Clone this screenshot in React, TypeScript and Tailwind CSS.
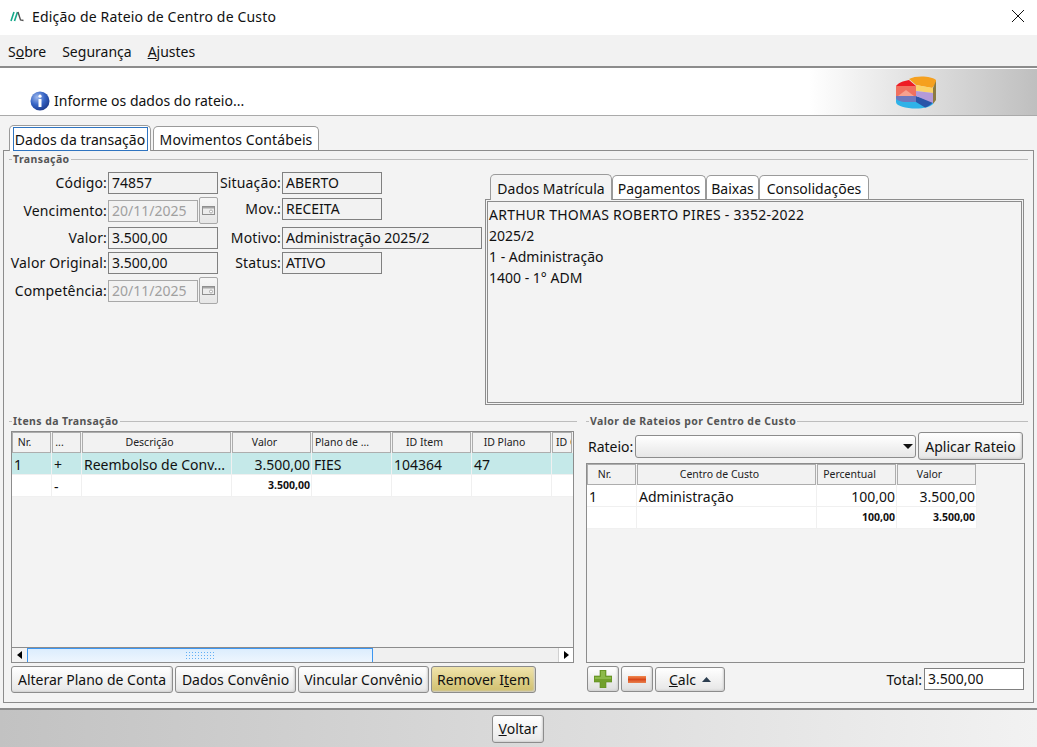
const font = "font-['Noto_Sans',sans-serif]";

function Box({ w, children, disabled, white }: { w: string; children?: React.ReactNode; disabled?: boolean; white?: boolean }) {
  return (
    <div className={`${w} h-[22px] shrink-0 border border-[#808080] pl-[3px] text-[14px] leading-[20px] ${disabled ? "border-[#a8a8a8] text-[#a0a0a0]" : "text-[#111]"} ${white ? "bg-white" : "bg-[#f2f2f2]"}`}>
      {children}
    </div>
  );
}

function Label({ w, children }: { w: string; children: React.ReactNode }) {
  return <div className={`${w} shrink-0 pr-[1px] text-right text-[14px] leading-[20px] tracking-[0.15px] whitespace-nowrap text-[#111]`}>{children}</div>;
}

function CalendarBtn() {
  return (
    <div className="ml-[1px] flex h-[27px] w-[19px] shrink-0 items-center justify-center rounded-[2px] border border-[#a8a8a8] bg-gradient-to-b from-[#f6f6f6] to-[#e6e6e6]">
      <svg width="13" height="9" viewBox="0 0 13 9">
        <rect x="0.5" y="0.5" width="12" height="8" fill="#ececec" stroke="#8f8f8f" />
        <rect x="1" y="1" width="11" height="1.5" fill="#a5a5a5" />
        <circle cx="9" cy="5.5" r="1.5" fill="#fff" stroke="#8f8f8f" strokeWidth="0.7" />
      </svg>
    </div>
  );
}

function Legend({ children }: { children: React.ReactNode }) {
  return (
    <div className="flex h-[10px] items-center">
      <div className="h-[1px] w-[3px] bg-[#bdbdbd]" />
      <span className="px-[1px] text-[10.5px] leading-[10px] font-bold tracking-[0.4px] text-[#555]">{children}</span>
      <div className="h-[1px] flex-1 bg-[#bdbdbd]" />
    </div>
  );
}

function Btn({ className, children }: { className?: string; children: React.ReactNode }) {
  return (
    <div className={`flex items-center justify-center rounded-[3px] border border-[#8c8c8c] text-[14px] text-[#111] shadow-[inset_-1px_-1px_2px_#d0d0d0] ${className ?? "bg-gradient-to-b from-white to-[#e8e8e8]"}`}>
      {children}
    </div>
  );
}

function Head({ children, align }: { children?: React.ReactNode; align?: string }) {
  return (
    <div className={`mr-[1px] flex h-[21px] items-center overflow-hidden border border-[#adadad] bg-[#f2f2f2] pt-[1px] text-[10.5px] whitespace-nowrap text-[#222] ${align ?? "justify-center pr-[14px]"}`}>
      {children}
    </div>
  );
}

function Cell({ children, right, bold, last }: { children?: React.ReactNode; right?: boolean; bold?: boolean; last?: boolean }) {
  return (
    <div className={`flex h-[22px] items-center overflow-hidden whitespace-nowrap border-b border-[#f0f0f0] pt-[1px] pl-[2px] ${last ? "" : "border-r"} ${right ? "justify-end pr-[1px]" : ""} ${bold ? "text-[10.5px] font-bold" : "text-[14px]"} text-[#111]`}>
      {children}
    </div>
  );
}

function MatrixLogo() {
  return (
    <svg width="14" height="11" viewBox="0 0 14 11">
      <path d="M1 10 L4 1 M4.5 10 L7.5 1" stroke="#14a88a" strokeWidth="1.6" fill="none" />
      <path d="M8 1 L10.5 9 L13.5 9.5" stroke="#555" strokeWidth="1.4" fill="none" />
    </svg>
  );
}

function InfoIcon() {
  return (
    <svg width="20" height="20" viewBox="0 0 20 20">
      <defs>
        <radialGradient id="inf" cx="35%" cy="30%" r="75%">
          <stop offset="0" stopColor="#9db8ee" />
          <stop offset="0.55" stopColor="#3563c4" />
          <stop offset="1" stopColor="#1c3a8c" />
        </radialGradient>
      </defs>
      <circle cx="10" cy="10" r="9.5" fill="url(#inf)" />
      <circle cx="10" cy="5.2" r="1.6" fill="#fff" />
      <rect x="8.5" y="8" width="3" height="8" rx="0.6" fill="#fff" />
    </svg>
  );
}

function PieLogo() {
  return (
    <svg width="40" height="33" viewBox="0 0 40 33">
      <path d="M0 21 V26 C0 30 10 32.500 20 32.500 C28 32.500 34 31 37 28 V21 Z" fill="#2fb2e8" />
      <path d="M20 20 L37 26 C35 29 32 30.500 29 31.500 L20 26 Z" fill="#2a55a8" />
      <path d="M0 10 C2 7 7 5 13 4 L20 10 Z" fill="#ee1c25" />
      <path d="M0 10 H20 V20 H0 Z" fill="#f0705f" />
      <path d="M2 20 L10 14 L18 20 Z" fill="#f7a190" />
      <path d="M0 20 H20 V26 H10 C5 26 0 24 0 22 Z" fill="#6f78bd" />
      <path d="M13 3 C20 -1 36 0 40 4 V8 L36 12 L20 9 Z" fill="#f5a01f" />
      <path d="M20 9 L37 12 V17 L20 15 Z" fill="#fbd268" />
      <path d="M20 15 L37 17 V27 L20 20 Z" fill="#b49ad8" />
      <path d="M37 12 L40 5 V24 L37 28 Z" fill="#8c7a40" />
    </svg>
  );
}

function PlusIcon() {
  return (
    <svg width="18" height="18" viewBox="0 0 18 18">
      <path d="M6 0 H12 V6 H18 V12 H12 V18 H6 V12 H0 V6 H6 Z" fill="#72a02c" stroke="#5d8a20" strokeWidth="0.6" />
      <path d="M7 1 H11 V7 H17 V9 H1 V7 H7 Z" fill="#8cb94a" />
    </svg>
  );
}

export default function App() {
  return (
    <div className={`flex h-[747px] w-[1037px] flex-col overflow-hidden bg-white ${font}`}>
      {/* barra de titulo */}
      <div className="flex h-[35px] shrink-0 items-center pr-[12px] pb-[3px] pl-[10px]">
        <MatrixLogo />
        <span className="ml-[8px] flex-1 text-[14px] tracking-[0.17px] text-[#111]">Edição de Rateio de Centro de Custo</span>
        <svg width="14" height="14" viewBox="0 0 14 14">
          <path d="M1 1 L13 13 M13 1 L1 13" stroke="#111" strokeWidth="1" />
        </svg>
      </div>

      {/* menu */}
      <div className="flex h-[33px] shrink-0 items-center gap-[16px] border-b-2 border-[#8c8c8c] bg-[#f2f2f2] pt-[1px] pl-[8px] text-[14px] text-[#111]">
        <span>S<u>o</u>bre</span>
        <span>Segurança</span>
        <span><u>A</u>justes</span>
      </div>

      {/* cabecalho */}
      <div className="mt-[1px] flex h-[47px] shrink-0 items-end border-b border-[#aaaaaa] bg-gradient-to-r from-white from-[78%] to-[#bfbfbf]">
        <div className="mb-[4px] ml-[30px] flex flex-1 items-center gap-[4px] text-[14px] text-[#111]">
          <InfoIcon />
          <span>Informe os dados do rateio...</span>
        </div>
        <div className="mr-[101px] mb-[6px]"><PieLogo /></div>
      </div>

      {/* corpo */}
      <div className="flex h-[592px] shrink-0 flex-col bg-[#f3f3f3] pt-[9px]">
        <div className="flex h-[25px] items-end pl-[9px]">
          <div className="z-10 -mb-[1px] flex h-[26px] w-[142px] items-center justify-center rounded-t-[5px] border border-b-0 border-[#9a9a9a] bg-white pt-[1px]">
            <div className="flex h-[24px] w-[135px] items-center justify-center border border-[#2f74c0] pt-[1px] text-[14px] whitespace-nowrap text-[#111]">Dados da transação</div>
          </div>
          <div className="ml-[2px] flex h-[24px] w-[166px] items-center justify-center rounded-t-[5px] border border-b-0 border-[#9a9a9a] bg-white pt-[1px] text-[14px] tracking-[0.1px] whitespace-nowrap text-[#111]">Movimentos Contábeis</div>
        </div>

        <div className="mx-[3px] flex h-[553px] flex-col border border-[#8c8c8c] px-[5px] pt-[3px]">
          <Legend>Transação</Legend>

          <div className="flex h-[249px]">
            {/* coluna de campos */}
            <div className="flex w-[208px] shrink-0 flex-col pt-[8px]">
              <div className="flex h-[22px] items-center"><Label w="w-[99px]">Código:</Label><Box w="w-[110px]">74857</Box></div>
              <div className="mt-[3px] flex h-[27px] items-center"><Label w="w-[99px]">Vencimento:</Label><Box w="w-[90px]" disabled>20/11/2025</Box><CalendarBtn /></div>
              <div className="mt-[3px] flex h-[22px] items-center"><Label w="w-[99px]">Valor:</Label><Box w="w-[110px]">3.500,00</Box></div>
              <div className="mt-[3px] flex h-[22px] items-center"><Label w="w-[99px]">Valor Original:</Label><Box w="w-[110px]">3.500,00</Box></div>
              <div className="mt-[3px] flex h-[27px] items-center"><Label w="w-[99px]">Competência:</Label><Box w="w-[90px]" disabled>20/11/2025</Box><CalendarBtn /></div>
            </div>

            <div className="flex w-[268px] shrink-0 flex-col pt-[8px]">
              <div className="flex h-[22px] items-center"><Label w="w-[65px]">Situação:</Label><Box w="w-[100px]">ABERTO</Box></div>
              <div className="mt-[4px] flex h-[22px] items-center"><Label w="w-[65px]">Mov.:</Label><Box w="w-[100px]">RECEITA</Box></div>
              <div className="mt-[7px] flex h-[22px] items-center"><Label w="w-[65px]">Motivo:</Label><Box w="w-[200px]">Administração 2025/2</Box></div>
              <div className="mt-[3px] flex h-[22px] items-center"><Label w="w-[65px]">Status:</Label><Box w="w-[100px]">ATIVO</Box></div>
            </div>

            {/* abas da matricula */}
            <div className="flex w-[539px] shrink-0 flex-col pt-[10px]">
              <div className="flex h-[25px] items-end pl-[5px] text-[14px] text-[#111]">
                <div className="z-10 -mb-[1px] flex h-[26px] w-[122px] items-center justify-center rounded-t-[5px] border border-b-0 border-[#9a9a9a] bg-[#f3f3f3] pt-[1px] whitespace-nowrap">Dados Matrícula</div>
                <div className="flex h-[24px] w-[94px] items-center justify-center rounded-t-[5px] border border-b-0 border-[#9a9a9a] bg-white pt-[1px] whitespace-nowrap">Pagamentos</div>
                <div className="flex h-[24px] w-[53px] items-center justify-center rounded-t-[5px] border border-b-0 border-[#9a9a9a] bg-white pt-[1px] whitespace-nowrap">Baixas</div>
                <div className="flex h-[24px] w-[110px] items-center justify-center rounded-t-[5px] border border-b-0 border-[#9a9a9a] bg-white pt-[1px] whitespace-nowrap">Consolidações</div>
              </div>
              <div className="h-[206px] border border-[#8c8c8c] p-[1px]">
                <div className="h-full border border-[#8c8c8c] pt-[2px] pl-[1px] text-[14px] leading-[21px] text-[#111]">
                  <div className="tracking-[0.25px]">ARTHUR THOMAS ROBERTO PIRES - 3352-2022</div>
                  <div>2025/2</div>
                  <div>1 - Administração</div>
                  <div>1400 - 1° ADM</div>
                </div>
              </div>
            </div>
          </div>

          {/* parte de baixo */}
          <div className="flex pt-[3px]">
            <div className="flex w-[568px] shrink-0 flex-col">
              <Legend>Itens da Transação</Legend>
              <div className="mt-[5px] ml-[2px] flex h-[232px] w-[563px] flex-col border border-[#8c8c8c]">
                <div className="grid flex-1 content-start overflow-hidden grid-cols-[40px_30px_150px_80px_80px_80px_80px_21px]">
                  <Head align="justify-center pr-[14px]">Nr.</Head>
                  <Head>...</Head>
                  <Head>Descrição</Head>
                  <Head>Valor</Head>
                  <Head align="justify-start pl-[2px]">Plano de ...</Head>
                  <Head>ID Item</Head>
                  <Head>ID Plano</Head>
                  <Head align="justify-start pl-[3px]">ID C</Head>

                  <div className="col-span-8 grid grid-cols-subgrid bg-[#c5e9e9]">
                    <Cell>1</Cell>
                    <Cell>+</Cell>
                    <Cell>Reembolso de Conv...</Cell>
                    <Cell right>3.500,00</Cell>
                    <Cell>FIES</Cell>
                    <Cell>104364</Cell>
                    <Cell>47</Cell>
                    <Cell last />
                  </div>
                  <div className="col-span-8 grid grid-cols-subgrid bg-white">
                    <Cell />
                    <Cell>-</Cell>
                    <Cell />
                    <Cell right bold>3.500,00</Cell>
                    <Cell />
                    <Cell />
                    <Cell />
                    <Cell last />
                  </div>
                </div>
                {/* barra de rolagem */}
                <div className="flex h-[15px] shrink-0 border-t border-[#8c8c8c] bg-[#f0f0f0]">
                  <div className="flex w-[15px] items-center justify-center bg-[#f3f3f3]">
                    <svg width="5" height="8" viewBox="0 0 5 8"><path d="M5 0 V8 L0 4 Z" fill="#000" /></svg>
                  </div>
                  <div className="flex w-[346px] items-center justify-center border-x border-t border-[#3d96f0] bg-gradient-to-b from-[#dcedfd] to-[#eef6fe]">
                    <div className="h-[9px] w-[30px] bg-[radial-gradient(#62b0f5_1px,transparent_1px)] bg-[length:3px_3px]" />
                  </div>
                  <div className="flex-1" />
                  <div className="flex w-[15px] items-center justify-center border-l border-[#d0d0d0] bg-white">
                    <svg width="5" height="8" viewBox="0 0 5 8"><path d="M0 0 V8 L5 4 Z" fill="#000" /></svg>
                  </div>
                </div>
              </div>
              <div className="mt-[3px] ml-[2px] flex h-[27px] gap-[2px]">
                <Btn className="w-[162px] bg-gradient-to-b from-white to-[#e6e6e6]">Alterar Plano de Conta</Btn>
                <Btn className="w-[121px] bg-gradient-to-b from-white to-[#e6e6e6]">Dados Convênio</Btn>
                <Btn className="w-[131px] bg-gradient-to-b from-white to-[#e6e6e6]">Vincular Convênio</Btn>
                <Btn className="w-[105px] bg-gradient-to-b from-[#f0e4ab] to-[#cfbe6c]"><span>Remover I<u>t</u>em</span></Btn>
              </div>
            </div>

            <div className="ml-[9px] flex w-[442px] shrink-0 flex-col">
              <Legend>Valor de Rateios por Centro de Custo</Legend>
              <div className="mt-[6px] flex h-[28px] items-center pl-[2px]">
                <span className="w-[47px] text-[14px] text-[#111]">Rateio:</span>
                <div className="flex h-[23px] w-[281px] items-center justify-end rounded-[3px] border border-[#8c8c8c] bg-gradient-to-b from-white to-[#e6e6e6] pr-[2px]">
                  <svg width="10" height="5" viewBox="0 0 10 5"><path d="M0 0 H10 L5 5 Z" fill="#111" /></svg>
                </div>
                <Btn className="ml-[2px] h-[28px] w-[105px] bg-gradient-to-b from-white to-[#e6e6e6]">Aplicar Rateio</Btn>
              </div>
              <div className="mt-[3px] h-[200px] w-[439px] border border-[#8c8c8c]">
                <div className="grid content-start grid-cols-[50px_180px_80px_80px]">
                  <Head>Nr.</Head>
                  <Head>Centro de Custo</Head>
                  <Head>Percentual</Head>
                  <Head>Valor</Head>
                  <div className="col-span-4 grid grid-cols-subgrid bg-white">
                    <Cell>1</Cell>
                    <Cell>Administração</Cell>
                    <Cell right>100,00</Cell>
                    <Cell right>3.500,00</Cell>
                  </div>
                  <div className="col-span-4 grid grid-cols-subgrid bg-white">
                    <Cell />
                    <Cell />
                    <Cell right bold>100,00</Cell>
                    <Cell right bold>3.500,00</Cell>
                  </div>
                </div>
              </div>
              <div className="mt-[3px] ml-[1px] flex h-[26px] items-center">
                <Btn className="h-[26px] w-[32px] bg-gradient-to-b from-white to-[#dedede]"><PlusIcon /></Btn>
                <Btn className="ml-[2px] h-[26px] w-[32px] bg-gradient-to-b from-white to-[#dedede]">
                  <div className="h-[7px] w-[18px] bg-gradient-to-b from-[#f08a50] via-[#d9481a] to-[#e8804d]" />
                </Btn>
                <Btn className="ml-[2px] h-[25px] w-[70px] gap-[6px] bg-gradient-to-b from-white to-[#e6e6e6]">
                  <span><u>C</u>alc</span>
                  <svg width="9" height="5" viewBox="0 0 9 5"><path d="M0 5 H9 L4.5 0 Z" fill="#2c3e50" /></svg>
                </Btn>
                <span className="ml-auto pr-[2px] text-[14px] text-[#111]">Total:</span>
                <Box w="w-[100px] mr-[4px]" white>3.500,00</Box>
              </div>
            </div>
          </div>
        </div>
      </div>

      {/* rodape */}
      <div className="flex flex-1 items-center justify-center border-t-2 border-[#8c8c8c] bg-gradient-to-r from-[#c2c2c2] to-[#f2f2f2] pr-[1px]">
        <Btn className="h-[28px] w-[52px] bg-gradient-to-b from-white to-[#e8e8e8]"><span><u>V</u>oltar</span></Btn>
      </div>
    </div>
  );
}
